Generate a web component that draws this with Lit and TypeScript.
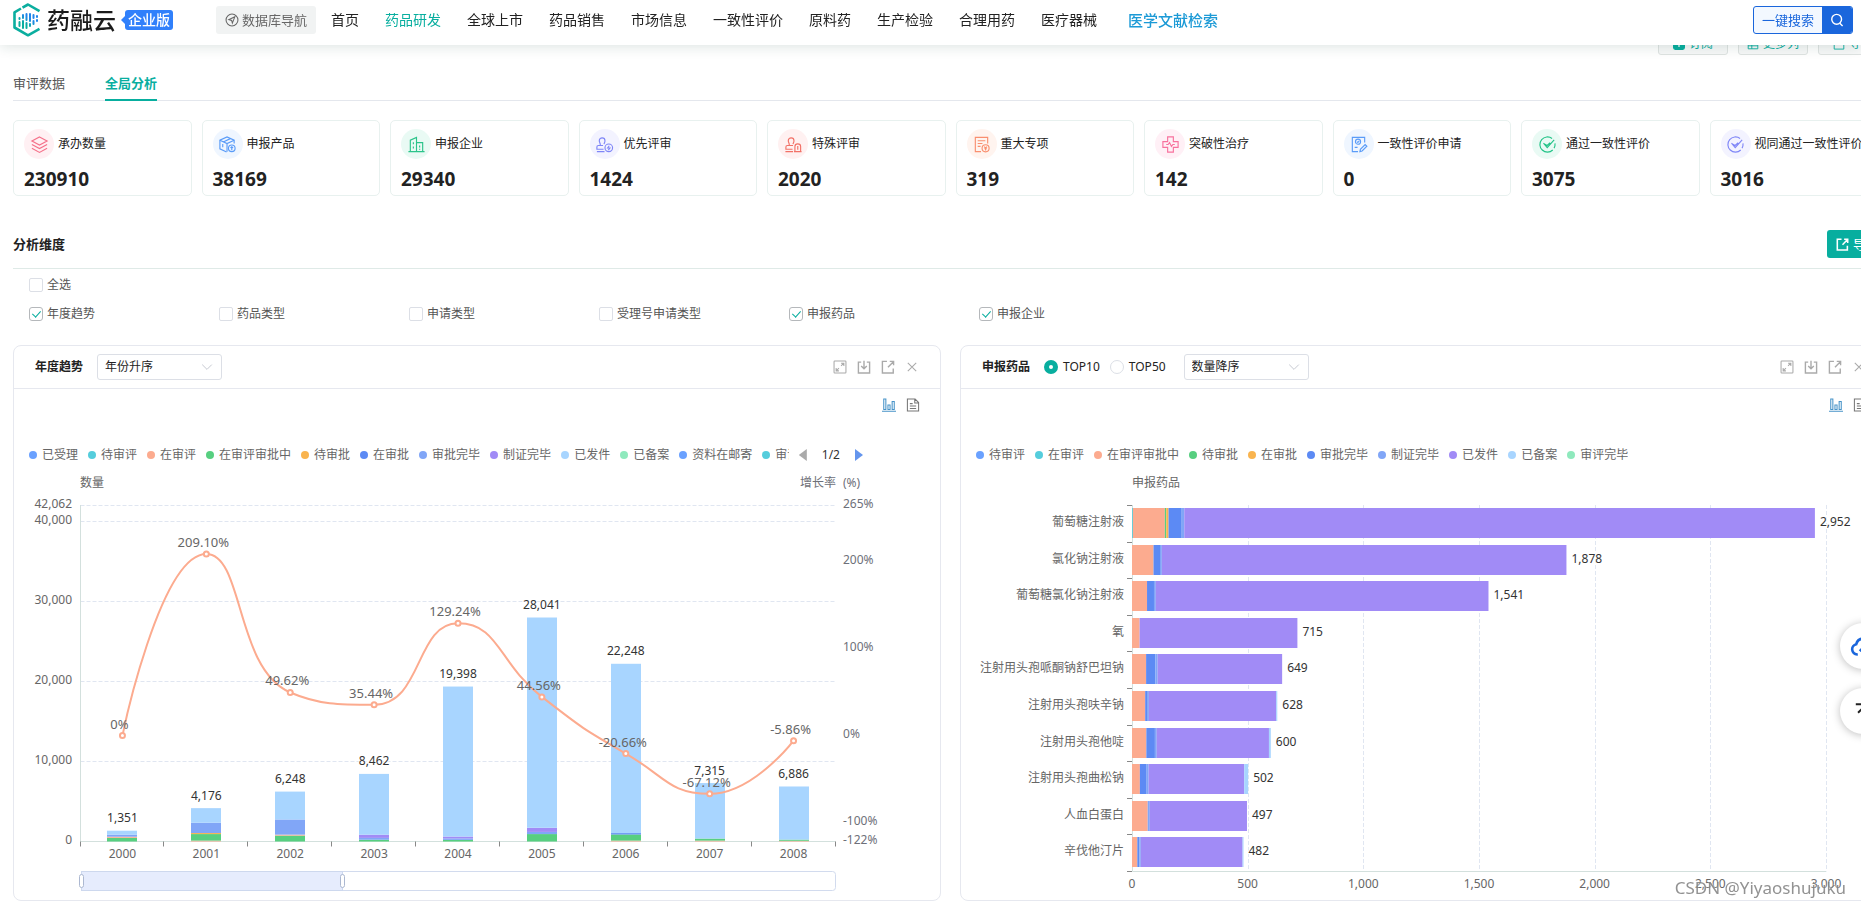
import { LitElement, html, svg, css } from "lit";
import { customElement, property } from "lit/decorators.js";
import { classMap } from "lit/directives/class-map.js";
import { styleMap } from "lit/directives/style-map.js";

const C = {
  sky: "#6aa1ff",
  cyan: "#55cddc",
  peach: "#fcab8f",
  green: "#57cf80",
  amber: "#f9b44f",
  royal: "#5c8af4",
  periwinkle: "#81a6f7",
  violet: "#a18bf6",
  pale: "#a8d5ff",
  mint: "#8fe9bd",
};

const glyphs: Record<string, unknown> = {
  layers: svg`<path d="M10 2l8 4.300-8 4.300-8-4.300z"/><path d="M2 10l8 4.300 8-4.300"/><path d="M2 14l8 4.300 8-4.300"/>`,
  box: svg`<path d="M9 18l-7-3.500v-9L9.500 2 17 5.500V9"/><path d="M2 5.500L9.500 9 17 5.500M9.500 9v8.500M5.500 7.300L13 3.800M5 9.500v3.500"/><circle cx="14.500" cy="14" r="3.500"/><path d="M14.500 16v-3.600M13.100 13.600l1.400-1.300 1.400 1.300"/>`,
  building: svg`<path d="M1.500 17.500h17M3.500 17.500V5.500L10 2.500v15M10 8h6.500v9.500M6.700 7.500v2.200M6.700 12v2.200M13.300 11v2.200M13.300 14.500v1"/>`,
  stampFlash: svg`<path d="M8.500 11H3.500c-1 0-1.500.6-1.500 1.500V15h7M2 17.500h8M5.500 11c.5-2-1-3-1-5a3 3 0 0 1 6 0c0 1.600-.8 2.500-1 3.500"/><circle cx="14.500" cy="13.500" r="4"/><path d="M15 11.300l-1.700 2.400h2.400L14 15.900"/>`,
  stampShield: svg`<path d="M9.500 11H3.500c-1 0-1.500.6-1.500 1.500V15h7M1.500 17.500h8M5.500 11c.5-2-1-3-1-5a3 3 0 0 1 6 0c0 1.600-.8 2.500-1 3.500"/><path d="M11.500 17.500V12c0-3.500 6-3.500 6 0v5.500zM10.500 17.500h8M14.500 11.500v4"/>`,
  docMoney: svg`<path d="M16.500 9V2.500h-13v15h6M6 6h8M6 9h5M6 12h3"/><circle cx="14.300" cy="14" r="3.700"/><path d="M12.900 12.200l1.400 1.600 1.400-1.600M14.300 13.800v2.400M13 14.500h2.600"/>`,
  cross: svg`<path d="M7 2h6v5h5v6h-5v5H7v-5H2V7h5z"/><path d="M5.500 10h2l1.500-2 2 4 1.500-2h2"/>`,
  docPen: svg`<path d="M16.500 8V2.500h-13v15h6"/><circle cx="9.500" cy="7" r="2.700"/><path d="M8.400 7l.9.900 1.500-1.700M6 13h3"/><path d="M11.500 17.500l.5-2.500 5-5 1.800 1.800-5 5z"/>`,
  check: svg`<path d="M15.500 15.800A8 8 0 1 1 14.800 3.600M17.900 8.800a8 8 0 0 1-1 5"/><path d="M5.800 8.600l3.900 4.600L17 5.200M6.300 9.200l3.300 1.800 3.200-2.800"/>`,
  expand: svg`<rect x="1.500" y="1.500" width="17" height="17" rx="1"/><path d="M11.500 4.500h4v4M15.500 4.500l-4 4M8.500 15.500h-4v-4M4.500 15.500l4-4"/>`,
  download: svg`<path d="M6 3H2v15.500h16V3h-4M10 1v11M6 8.500l4 4 4-4"/>`,
  share: svg`<path d="M8.500 2H2v16.500h15.500V12M12.500 2H18v5.500M18 2l-8 8.500"/>`,
  close: svg`<path d="M4 4l12 12M16 4L4 16"/>`,
  bars: svg`<path d="M0 19h20M2.500 16.500V1.500h3v15zM8.500 16.500V10h3v6.500zM14.500 16.500V5h3v11.500z"/>`,
  doc: svg`<path d="M2 1.500h11l5 5v12H2zM12.500 1.500V7H18M5.500 8h4M5.500 11.500h9M5.500 15h9"/>`,
  search: svg`<circle cx="9.500" cy="9" r="7"/><path d="M14 14.500l4 4"/>`,
  compass: svg`<circle cx="10" cy="10" r="8.500"/><path d="M14 5.500L5.500 9.500l4 1.200 1 3.800z"/>`,
  plusBox: svg`<rect x="1" y="1" width="18" height="18" rx="3" fill="currentColor"/><path d="M10 5v10M5 10h10" stroke="#fff"/>`,
  columns: svg`<path d="M18 9V18H2V4h9M2 13h16M8 4v14M12 9l6-6"/>`,
  save: svg`<path d="M6 3H2v15.500h16V3h-4M10 1v9"/>`,
  chevron: svg`<path d="M2 6l8 8 8-8"/>`,
  cloud: svg`<path d="M6 16.500H5.500A4 4 0 0 1 4.800 8.600 5.600 5.600 0 0 1 15.500 8a4.300 4.300 0 0 1-.5 8.500h-1M10 18v-6.500M7.500 14l2.500-2.500 2.500 2.500"/>`,
  toTop: svg`<path d="M2 2.500h16M10 19V7M4.500 12L10 6.500l5.500 5.500"/>`,
};

@customElement("ui-icon")
class UiIcon extends LitElement {
  @property() name = "";
  @property({ type: Number }) size = 14;
  @property({ type: Number }) weight = 1.5;
  static styles = css`
    :host { display: inline-flex; flex: none; }
    svg { display: block; fill: none; stroke: currentColor; }
  `;
  render() {
    return html`<svg viewBox="0 0 20 20" width=${this.size} height=${this.size} stroke-width=${this.weight} aria-hidden="true">${glyphs[this.name]}</svg>`;
  }
}

const chartText = css`
  :host { display: block; }
  svg { display: block; width: 100%; height: auto; }
  text { font-family: "Noto Sans", "Noto Sans CJK SC", sans-serif; font-size: 12px; fill: #666; dominant-baseline: central; }
  .end { text-anchor: end; }
  .mid { text-anchor: middle; }
  .value { fill: #333; stroke: #fff; stroke-width: 2px; paint-order: stroke; }
  .rate { font-size: 13px; }
  .right { fill: #6e7079; }
  .grid { stroke: #e0e6f1; stroke-dasharray: 4 2; }
  .axis { fill: none; stroke: #d3e0dd; }
  .tick { stroke: #888; }
  .curve { fill: none; stroke: #fcab8f; stroke-width: 2; }
  .dot { fill: #fff; stroke: #fcab8f; stroke-width: 2; }
  .track { fill: #fff; stroke: #d2dbee; }
  .window { fill: #e6ecfd; stroke: #cdd8ee; }
  .handle { fill: #fff; stroke: #acb8d1; }
`;

type Pt = [number, number];

/* Smooth line whose control points never leave the box between neighbours. */
function smoothPath(p: Pt[]): string {
  const s = 0.5;
  const clamp = (v: number, a: number, b: number) => Math.max(Math.min(a, b), Math.min(Math.max(a, b), v));
  let d = `M${p[0][0]} ${p[0][1]}`;
  let out: Pt = p[0];
  for (let i = 1; i < p.length; i++) {
    const cur = p[i];
    const prev = p[i - 1];
    const next = p[i + 1];
    let cin: Pt = cur;
    let cout: Pt = cur;
    if (next) {
      const lp = Math.hypot(cur[0] - prev[0], cur[1] - prev[1]);
      const ln = Math.hypot(next[0] - cur[0], next[1] - cur[1]);
      const r = ln / (ln + lp);
      const axis = (k: 0 | 1): [number, number] => {
        const v = next[k] - prev[k];
        const n = clamp(cur[k] + v * s * r, cur[k], next[k]);
        const q = clamp(cur[k] - ((n - cur[k]) * lp) / ln, cur[k], prev[k]);
        return [q, clamp(cur[k] + ((cur[k] - q) * ln) / lp, cur[k], next[k])];
      };
      const [ax, bx] = axis(0);
      const [ay, by] = axis(1);
      cin = [ax, ay];
      cout = [bx, by];
    }
    d += `C${out[0]} ${out[1]} ${cin[0]} ${cin[1]} ${cur[0]} ${cur[1]}`;
    out = cout;
  }
  return d;
}

type Seg = [string, number];
const years: { year: string; total: number; rate: number; label: string; parts: Seg[] }[] = [
  { year: "2000", total: 1351, rate: 0, label: "0%", parts: [[C.green, 460], [C.peach, 140], [C.periwinkle, 240]] },
  { year: "2001", total: 4176, rate: 209.1, label: "209.10%", parts: [[C.peach, 110], [C.green, 820], [C.amber, 130], [C.periwinkle, 1290]] },
  { year: "2002", total: 6248, rate: 49.62, label: "49.62%", parts: [[C.green, 740], [C.peach, 120], [C.periwinkle, 1900]] },
  { year: "2003", total: 8462, rate: 35.44, label: "35.44%", parts: [[C.green, 220], [C.periwinkle, 230], [C.violet, 400]] },
  { year: "2004", total: 19398, rate: 129.24, label: "129.24%", parts: [[C.green, 200], [C.periwinkle, 190], [C.violet, 230]] },
  { year: "2005", total: 28041, rate: 44.56, label: "44.56%", parts: [[C.green, 930], [C.periwinkle, 270], [C.violet, 520]] },
  { year: "2006", total: 22248, rate: -20.66, label: "-20.66%", parts: [[C.peach, 110], [C.green, 770], [C.royal, 170]] },
  { year: "2007", total: 7315, rate: -67.12, label: "-67.12%", parts: [[C.peach, 110], [C.green, 260]] },
  { year: "2008", total: 6886, rate: -5.86, label: "-5.86%", parts: [[C.peach, 90], [C.green, 150]] },
];

@customElement("year-chart")
class YearChart extends LitElement {
  static styles = chartText;
  render() {
    const x0 = 66.5, x1 = 821.5, base = 376.5, h = 336;
    const band = (x1 - x0) / years.length;
    const y = (v: number) => base - (v / 42062) * h;
    const ry = (v: number) => base - ((v + 122) / 387) * h;
    const cx = (i: number) => x0 + band * (i + 0.5);
    const pts = years.map((d, i): Pt => [cx(i), ry(d.rate)]);
    return html`<svg viewBox="0 0 926 435" role="img" aria-label="年度趋势">
      <text x="66" y="17">数量</text>
      <text class="right" x="786" y="17">增长率</text><text class="right" x="829" y="17">(%)</text>
      ${[42062, 40000, 30000, 20000, 10000].map((v) => svg`<line class="grid" x1=${x0} x2=${x1} y1=${Math.floor(y(v)) + 0.5} y2=${Math.floor(y(v)) + 0.5}/>`)}
      ${[42062, 40000, 30000, 20000, 10000, 0].map((v) => svg`<text class="end" x="58" y=${Math.floor(y(v)) - 2}>${v.toLocaleString("en-US")}</text>`)}
      ${[265, 200, 100, 0, -100, -122].map((v) => svg`<text class="right" x="829" y=${Math.floor(ry(v)) - 2}>${v}%</text>`)}
      <path class="axis" d="M${x0} 40V${base}H${x1}"/>
      ${[...years, null].map((_, i) => svg`<line class="tick" x1=${Math.round(x0 + band * i) - 0.5} x2=${Math.round(x0 + band * i) - 0.5} y1=${base} y2=${base + 5}/>`)}
      ${years.map((d, i) => {
        const left = Math.round(cx(i) - 15);
        const used = d.parts.reduce((a, s) => a + s[1], 0);
        let acc = 0;
        return svg`${([...d.parts, [C.pale, d.total - used]] as Seg[]).map(([c, v]) => {
          const top = y(acc + v);
          const height = y(acc) - top;
          acc += v;
          return svg`<rect x=${left} y=${top} width="30" height=${height} fill=${c}/>`;
        })}
        <text class="mid" x=${cx(i)} y=${base + 12}>${d.year}</text>`;
      })}
      <path class="curve" d=${smoothPath(pts)}/>
      ${pts.map((p) => svg`<circle class="dot" cx=${p[0]} cy=${p[1]} r="2.5"/>`)}
      ${years.map((d, i) => svg`<text class="mid value" x=${cx(i)} y=${y(d.total) - 13}>${d.total.toLocaleString("en-US")}</text>
        <text class="mid rate" x=${cx(i) - 3} y=${ry(d.rate) - 12}>${d.label}</text>`)}
      <rect class="track" x="67.500" y="406.500" width="754" height="19" rx="3"/>
      <rect class="window" x="67.500" y="406.500" width="261" height="19"/>
      <rect class="handle" x="65.500" y="409.500" width="4" height="13" rx="2"/>
      <rect class="handle" x="326.500" y="409.500" width="4" height="13" rx="2"/>
    </svg>`;
  }
}

const drugs: { name: string; total: number; parts: Seg[]; tail?: number }[] = [
  { name: "葡萄糖注射液", total: 2952, parts: [[C.cyan, 4], [C.peach, 138], [C.green, 6], [C.amber, 10], [C.royal, 54], [C.periwinkle, 14]] },
  { name: "氯化钠注射液", total: 1878, parts: [[C.peach, 93], [C.royal, 28], [C.periwinkle, 8]] },
  { name: "葡萄糖氯化钠注射液", total: 1541, parts: [[C.peach, 65], [C.royal, 30], [C.periwinkle, 8]] },
  { name: "氧", total: 715, parts: [[C.peach, 33]] },
  { name: "注射用头孢哌酮钠舒巴坦钠", total: 649, parts: [[C.peach, 61], [C.royal, 40], [C.periwinkle, 10]] },
  { name: "注射用头孢呋辛钠", total: 628, parts: [[C.peach, 57], [C.royal, 8], [C.periwinkle, 8]], tail: 5 },
  { name: "注射用头孢他啶", total: 600, parts: [[C.peach, 62], [C.royal, 37], [C.periwinkle, 8]], tail: 8 },
  { name: "注射用头孢曲松钠", total: 502, parts: [[C.peach, 34], [C.royal, 27], [C.periwinkle, 11]], tail: 17 },
  { name: "人血白蛋白", total: 497, parts: [[C.peach, 68], [C.periwinkle, 9]] },
  { name: "辛伐他汀片", total: 482, parts: [[C.peach, 23], [C.royal, 9], [C.periwinkle, 6]], tail: 4 },
];

@customElement("drug-chart")
class DrugChart extends LitElement {
  static styles = chartText;
  render() {
    const x0 = 171, top = 40, band = 36.6, base = 406.5, k = 694 / 3000;
    const ticks = [0, 500, 1000, 1500, 2000, 2500, 3000];
    return html`<svg viewBox="0 0 926 435" role="img" aria-label="申报药品">
      <text x="171" y="17">申报药品</text>
      ${ticks.slice(1).map((v) => svg`<line class="grid" x1=${Math.round(x0 + v * k) + 0.5} x2=${Math.round(x0 + v * k) + 0.5} y1=${top} y2=${base}/>`)}
      <path class="axis" d="M171.500 ${top}V${base}H865"/>
      ${[...drugs, null].map((_, i) => svg`<line class="tick" x1="166" x2="171" y1=${Math.round(top + band * i) + 0.5} y2=${Math.round(top + band * i) + 0.5}/>`)}
      ${drugs.map((d, i) => {
        const y = Math.round(top + band * i + 3);
        const tail = d.tail ?? 0;
        const used = d.parts.reduce((a, s) => a + s[1], 0);
        let acc = 0;
        return svg`${([...d.parts, [C.violet, d.total - used - tail], [C.pale, tail]] as Seg[]).map(([c, v]) => {
          const x = x0 + acc * k;
          acc += v;
          return svg`<rect x=${x} y=${y} width=${v * k} height="30" fill=${c}/>`;
        })}
        <text class="end" x="163" y=${y + 13}>${d.name}</text>
        <text class="value" x=${x0 + d.total * k + 5} y=${y + 13}>${d.total.toLocaleString("en-US")}</text>`;
      })}
      ${ticks.map((v) => svg`<text class="mid" x=${x0 + v * k} y="418">${v.toLocaleString("en-US")}</text>`)}
    </svg>`;
  }
}

const leftLegend: [string, string][] = [
  ["已受理", C.sky], ["待审评", C.cyan], ["在审评", C.peach], ["在审评审批中", C.green], ["待审批", C.amber],
  ["在审批", C.royal], ["审批完毕", C.periwinkle], ["制证完毕", C.violet], ["已发件", C.pale], ["已备案", C.mint],
  ["资料在邮寄", C.sky], ["审评完毕", C.cyan],
];
const rightLegend: [string, string][] = [
  ["待审评", C.sky], ["在审评", C.cyan], ["在审评审批中", C.peach], ["待审批", C.green], ["在审批", C.amber],
  ["审批完毕", C.royal], ["制证完毕", C.periwinkle], ["已发件", C.violet], ["已备案", C.pale], ["审评完毕", C.mint],
];
const stats = [
  ["layers", "#f5718a", "#fff0f3", "承办数量", "230910"],
  ["box", "#5a9cf8", "#eff6ff", "申报产品", "38169"],
  ["building", "#2bc48a", "#e9faf4", "申报企业", "29340"],
  ["stampFlash", "#7f86f7", "#f3f3ff", "优先评审", "1424"],
  ["stampShield", "#f27167", "#fff1f1", "特殊评审", "2020"],
  ["docMoney", "#f98f6f", "#fff4ef", "重大专项", "319"],
  ["cross", "#f8719d", "#fff0f6", "突破性治疗", "142"],
  ["docPen", "#5a9cf8", "#eff6ff", "一致性评价申请", "0"],
  ["check", "#22c387", "#e9faf4", "通过一致性评价", "3075"],
  ["check", "#7f86f7", "#f3f3ff", "视同通过一致性评价", "3016"],
];
const navItems = ["首页", "药品研发", "全球上市", "药品销售", "市场信息", "一致性评价", "原料药", "生产检验", "合理用药", "医疗器械"];
const dims: [string, boolean][] = [
  ["年度趋势", true], ["药品类型", false], ["申请类型", false], ["受理号申请类型", false], ["申报药品", true], ["申报企业", true],
];

@customElement("app-root")
class AppRoot extends LitElement {
  static styles = css`
    :host {
      display: block;
      overflow-x: clip;
      background: #fff;
      color: #222;
      font: 12px/20px "Noto Sans", "Noto Sans CJK SC", sans-serif;
    }
    * { box-sizing: border-box; }
    a { color: inherit; text-decoration: none; }
    button, select { font: inherit; color: inherit; cursor: pointer; padding: 0; }

    .top {
      position: fixed;
      inset: 0 0 auto 0;
      z-index: 5;
      height: 45px;
      padding: 0 8px 5px 13px;
      display: flex;
      align-items: center;
      background: #fff;
      box-shadow: 0 2px 12px rgba(20, 70, 60, 0.14);
    }
    .brand { display: flex; align-items: center; }
    .mark { display: block; }
    .word { margin-left: 6px; font-size: 23px; line-height: 32px; font-weight: 500; color: #1b1b1b; }
    .edition {
      position: relative;
      margin-left: 9px;
      width: 48px;
      height: 20px;
      border-radius: 3px;
      background: #3080fb;
      color: #fff;
      font-size: 14px;
      font-weight: 500;
      text-align: center;
    }
    .edition::before {
      content: "";
      position: absolute;
      left: -4px;
      top: 6px;
      border: 4px solid transparent;
      border-left: 0;
      border-right: 4px solid #3080fb;
    }
    .guide {
      margin-left: 43px;
      width: 100px;
      height: 28px;
      display: flex;
      align-items: center;
      justify-content: center;
      gap: 3px;
      border: 0;
      border-radius: 3px;
      background: #f1f3f3;
      color: #666;
      font-size: 13px;
    }
    .nav { display: flex; gap: 26px; margin-left: 15px; font-size: 14px; white-space: nowrap; }
    .nav .on { color: #08ae9f; }
    .nav .lit { margin-left: 5px; color: #1c9ad6; font-size: 15px; font-weight: 500; }
    .find {
      margin-left: auto;
      width: 100px;
      height: 28px;
      display: flex;
      align-items: stretch;
      border: 1px solid #1a66dc;
      border-radius: 3px;
      overflow: hidden;
      background: #f3f8ff;
      color: #1a66dc;
      font-size: 13px;
    }
    .find span { flex: 1; line-height: 26px; }
    .find i { width: 30px; display: grid; place-items: center; background: #1a66dc; color: #fff; }

    .page { min-width: 1901px; padding: 27px 13px 0; }
    .actions { display: flex; justify-content: flex-end; gap: 10px; }
    .actions button {
      width: 70px;
      height: 28px;
      padding-top: 6px;
      display: flex;
      align-items: center;
      justify-content: center;
      gap: 4px;
      border: 1px solid #dfe3e2;
      border-radius: 3px;
      background: #f7f8f8;
      color: #08ae9f;
      white-space: nowrap;
    }
    .tabs { display: flex; gap: 40px; height: 46px; padding-top: 18px; font-size: 13px; background: linear-gradient(#e4e7ed, #e4e7ed) 0 45px / 100% 1px no-repeat; color: #555; }
    .tabs a { padding-bottom: 6px; border-bottom: 2px solid transparent; }
    .tabs .on { color: #08ae9f; font-weight: 700; border-color: #08ae9f; }

    .stats { display: grid; grid-template-columns: repeat(10, 1fr); gap: 10px; margin-top: 19px; }
    .card { min-width: 0; height: 76px; padding: 8px 0 0 10px; border: 1px solid #e8f1ef; border-radius: 5px; white-space: nowrap; }
    .name { display: flex; align-items: center; gap: 4px; }
    .disc { flex: none; width: 30px; height: 30px; border-radius: 50%; display: grid; place-items: center; }
    .num { margin-top: 6px; font-size: 19px; line-height: 28px; font-weight: 700; }

    .bar { display: flex; align-items: center; justify-content: space-between; margin-top: 34px; padding-bottom: 10px; border-bottom: 1px solid #dfeae7; }
    .bar h2 { margin: 0; font-size: 13px; line-height: 20px; }
    .export { height: 28px; padding: 0 9px; display: flex; align-items: center; gap: 4px; border: 0; border-radius: 3px; background: #08ae9f; color: #fff; font-size: 13px; }

    .dims { padding: 6px 0 0 16px; color: #555; }
    .dims label { display: flex; align-items: center; gap: 4px; }
    .grid { display: grid; grid-template-columns: repeat(auto-fill, 190px); margin-top: 9px; }
    input { appearance: none; flex: none; margin: 0; width: 14px; height: 14px; border: 1px solid #dcdfe6; background: #fff; }
    input[type="checkbox"] { border-radius: 2px; display: grid; place-items: center; }
    input[type="checkbox"]:checked { border-color: #b5b8bb; border-radius: 3px; }
    input[type="checkbox"]:checked::after {
      content: "";
      width: 4px;
      height: 7px;
      margin-top: -2px;
      border: solid #08ae9f;
      border-width: 0 1px 1px 0;
      transform: rotate(42deg);
    }
    input[type="radio"] { border-radius: 50%; }
    input[type="radio"]:checked { border: 5px solid #08ae9f; }

    .panels { display: grid; grid-template-columns: 1fr 1fr; gap: 19px; margin-top: 21px; }
    .panel { min-width: 0; border: 1px solid #e6e8ef; border-radius: 8px; }
    .head { height: 43px; padding: 0 21px 0 21px; display: flex; align-items: center; border-bottom: 1px solid #e6e8ef; }
    .head h3 { margin: 0 14px 0 0; font-size: 12px; line-height: 20px; }
    .pick { position: relative; display: flex; align-items: center; }
    .pick select { appearance: none; width: 125px; height: 26px; padding: 0 7px; border: 1px solid #dcdfe6; border-radius: 3px; background: #fff; }
    .pick ui-icon { position: absolute; right: 9px; color: #bfc3cc; pointer-events: none; }
    .radios { display: flex; gap: 10px; margin-right: 18px; }
    .radios label { display: flex; align-items: center; gap: 5px; }
    .ops { display: flex; gap: 10px; margin-left: auto; color: #aaa; }
    .ops button, .views button { display: flex; border: 0; background: none; }
    .views { display: flex; justify-content: flex-end; align-items: center; gap: 10px; height: 32px; padding-right: 20px; color: #777; }
    .views .on { color: #4793c8; }
    .legend { display: flex; align-items: center; height: 20px; margin: 24px 77px 0 15px; color: #666; }
    .keys { display: flex; gap: 10px; min-width: 0; overflow: hidden; white-space: nowrap; }
    .key { display: flex; align-items: center; gap: 5px; }
    .swatch { flex: none; width: 8px; height: 8px; border-radius: 50%; }
    .pager { flex: none; display: flex; align-items: center; gap: 15px; margin-left: 10px; color: #333; }
    .pager button { width: 8px; height: 12px; border: 0; background: #aaa; clip-path: polygon(100% 0, 0 50%, 100% 100%); }
    .pager .next { background: #6495ed; clip-path: polygon(0 0, 100% 50%, 0 100%); }

    .float { position: fixed; right: -25px; bottom: 173px; z-index: 4; display: grid; gap: 19px; }
    .float button { width: 46px; height: 46px; border: 0; border-radius: 50%; background: #fff; display: grid; place-items: center; color: #222; box-shadow: 0 1px 8px rgba(0, 0, 0, 0.26); }
    .float .cloud { color: #1a66dc; }
    .credit { position: fixed; right: 15px; bottom: 8px; z-index: 6; font: 17px/22px "Noto Sans", sans-serif; color: rgba(110, 110, 110, 0.75); text-shadow: 0 0 2px #fff; }
  `;

  private legend(items: [string, string][], paged: boolean) {
    return html`<div class="legend">
      <div class="keys">
        ${items.map(([t, c]) => html`<span class="key"><span class="swatch" style=${styleMap({ background: c })}></span>${t}</span>`)}
      </div>
      ${paged
        ? html`<div class="pager"><button aria-label="上一页"></button><span>1/2</span><button class="next" aria-label="下一页"></button></div>`
        : null}
    </div>`;
  }

  private ops() {
    return html`<div class="ops">
      <button aria-label="全屏"><ui-icon name="expand"></ui-icon></button>
      <button aria-label="下载"><ui-icon name="download" weight="2"></ui-icon></button>
      <button aria-label="导出"><ui-icon name="share" weight="2"></ui-icon></button>
      <button aria-label="关闭"><ui-icon name="close"></ui-icon></button>
    </div>`;
  }

  private views() {
    return html`<div class="views">
      <button class="on" aria-label="图表"><ui-icon name="bars"></ui-icon></button>
      <button aria-label="表格"><ui-icon name="doc"></ui-icon></button>
    </div>`;
  }

  render() {
    return html`
      <header class="top">
        <a class="brand" href="#">
          <svg class="mark" width="28" height="34" viewBox="0 0 28 34" fill="none">
            <defs>
              <linearGradient id="pulse" gradientUnits="userSpaceOnUse" x1="8" y1="25" x2="18" y2="10">
                <stop offset="0.3" stop-color="#0bae9f" />
                <stop offset="0.7" stop-color="#1f86ea" />
              </linearGradient>
            </defs>
            <path d="M8 5.500L1.500 9.300v15.200L15 32.300l11.500-6.500M9.500 4.600L15 1.500l11.500 6.700" stroke="#0bae9f" stroke-width="2.600" stroke-linejoin="round"/>
            <path d="M6.500 15v1M6.500 19v4M10 12v3M10 18v7M13.500 11v6M13.500 20v5M17 11v7M17 21v2M20.500 12v3M20.500 18v3M24 13v1M24 17v1" stroke="url(#pulse)" stroke-width="2" stroke-linecap="round"/>
          </svg>
          <span class="word">药融云</span>
          <span class="edition">企业版</span>
        </a>
        <button class="guide"><ui-icon name="compass"></ui-icon>数据库导航</button>
        <nav class="nav">
          ${navItems.map((n, i) => html`<a href="#" class=${classMap({ on: i === 1 })}>${n}</a>`)}
          <a href="#" class="lit">医学文献检索</a>
        </nav>
        <button class="find"><span>一键搜索</span><i><ui-icon name="search" weight="2"></ui-icon></i></button>
      </header>

      <main class="page">
        <div class="actions">
          <button><ui-icon name="plusBox" size="12" weight="2"></ui-icon>订阅</button>
          <button><ui-icon name="columns" size="12"></ui-icon>更多列</button>
          <button><ui-icon name="save" size="12"></ui-icon>导出</button>
        </div>
        <nav class="tabs"><a href="#">审评数据</a><a href="#" class="on">全局分析</a></nav>

        <section class="stats">
          ${stats.map(([icon, fg, bg, name, num]) => html`<div class="card">
            <div class="name">
              <span class="disc" style=${styleMap({ color: fg, background: bg })}><ui-icon name=${icon} size="19" weight="1.2"></ui-icon></span>${name}
            </div>
            <div class="num">${num}</div>
          </div>`)}
        </section>

        <div class="bar"><h2>分析维度</h2><button class="export"><ui-icon name="share" size="13" weight="2.4"></ui-icon>导出</button></div>
        <div class="dims">
          <label><input type="checkbox" />全选</label>
          <div class="grid">
            ${dims.map(([t, on]) => html`<label><input type="checkbox" ?checked=${on} />${t}</label>`)}
          </div>
        </div>

        <div class="panels">
          <section class="panel">
            <div class="head">
              <h3>年度趋势</h3>
              <div class="pick"><select aria-label="年份排序"><option>年份升序</option></select><ui-icon name="chevron" size="12"></ui-icon></div>
              ${this.ops()}
            </div>
            ${this.views()}
            ${this.legend(leftLegend, true)}
            <year-chart></year-chart>
          </section>
          <section class="panel">
            <div class="head">
              <h3>申报药品</h3>
              <div class="radios">
                <label><input type="radio" name="top" checked />TOP10</label>
                <label><input type="radio" name="top" />TOP50</label>
              </div>
              <div class="pick"><select aria-label="数量排序"><option>数量降序</option></select><ui-icon name="chevron" size="12"></ui-icon></div>
              ${this.ops()}
            </div>
            ${this.views()}
            ${this.legend(rightLegend, false)}
            <drug-chart></drug-chart>
          </section>
        </div>
      </main>

      <div class="float">
        <button class="cloud" aria-label="云服务"><ui-icon name="cloud" size="26" weight="2"></ui-icon></button>
        <button aria-label="回到顶部"><ui-icon name="toTop" size="18" weight="2.2"></ui-icon></button>
      </div>
      <div class="credit">CSDN @Yiyaoshujuku</div>
    `;
  }
}
